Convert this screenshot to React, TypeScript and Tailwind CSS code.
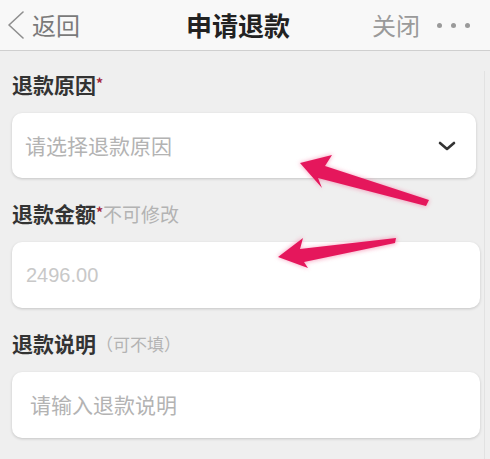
import React from 'react';

const cjk = { fontFamily: '"Noto Sans CJK SC", "Noto Sans", sans-serif' };

function ChevronLeft() {
  return (
    <svg width="20" height="28" viewBox="0 0 20 28" fill="none" stroke="#8f8f8f" strokeWidth="1.6" strokeLinecap="round" strokeLinejoin="round">
      <polyline points="17 1 3 14 17 27" />
    </svg>
  );
}

function ChevronDown() {
  return (
    <svg width="18" height="10" viewBox="0 0 18 10" fill="none" stroke="#333" strokeWidth="2.6" strokeLinecap="round" strokeLinejoin="round">
      <polyline points="2 2 9 8 16 2" />
    </svg>
  );
}

function Arrows() {
  return (
    <svg className="pointer-events-none absolute left-0 top-0" width="490" height="459" viewBox="0 0 490 459">
      <defs>
        <filter id="glow" x="-20%" y="-40%" width="140%" height="180%">
          <feGaussianBlur stdDeviation="2" />
        </filter>
      </defs>
      <g fill="#f47aa3" opacity="0.6" filter="url(#glow)">
        <polygon points="299,163 333,154 326,166 430,200 426,207 318,179 322,189" />
        <polygon points="277,257 303,237 300,249 397,237 396,244 304,263 309,269" />
      </g>
      <g fill="#e5175c">
        <polygon points="300,163 332,155 325,166 429,200 426,206 318,178 322,188" />
        <polygon points="278,257 303,238 300,249 396,238 395,243 304,262 308,268" />
      </g>
    </svg>
  );
}

function Field({ narrow, children }: { narrow?: boolean; children: React.ReactNode }) {
  return (
    <div
      className={
        narrow
          ? 'ml-3 mr-[8px] flex h-[65px] items-center rounded-[10px] bg-white pl-[13px] pr-5 shadow-[0_1px_3px_rgba(0,0,0,0.18)]'
          : 'ml-3 mr-[4px] flex h-[66px] items-center rounded-[10px] bg-white pl-[14px] pr-5 shadow-[0_1px_3px_rgba(0,0,0,0.18)]'
      }
    >
      {children}
    </div>
  );
}

export default function App() {
  return (
    <div className="relative h-[459px] w-[490px] overflow-hidden bg-[#efefef]" style={cjk}>
      <header className="flex h-[51px] items-center border-b border-[#cfcfcf] bg-[#f8f8f8] pl-[6px] pr-5">
        <div className="flex w-[150px] items-center gap-[6px] text-[24px] text-[#7a7a7a]">
          <ChevronLeft />
          <span className="leading-none">返回</span>
        </div>
        <div className="flex-1 text-center text-[26px] font-bold leading-none text-[#222]">申请退款</div>
        <div className="flex w-[150px] items-center justify-end gap-[17px]">
          <span className="text-[24px] leading-none text-[#9a9a9a]">关闭</span>
          <span className="flex gap-[9px]">
            <span className="h-[5px] w-[5px] rounded-full bg-[#9a9a9a]" />
            <span className="h-[5px] w-[5px] rounded-full bg-[#9a9a9a]" />
            <span className="h-[5px] w-[5px] rounded-full bg-[#9a9a9a]" />
          </span>
        </div>
      </header>

      <div className="mr-[5px] border-r border-[#e2e2e2] pb-6">
        <div className="mt-5 flex h-[28px] items-center px-3">
          <span className="text-[21px] font-bold text-[#333]">退款原因</span>
          <span className="self-start pt-[2px] text-[14px] font-bold text-[#a3263a]">*</span>
        </div>
        <div className="mt-[14px]">
          <Field narrow>
            <span className="flex-1 text-[21px] text-[#b3b3b3]">请选择退款原因</span>
            <ChevronDown />
          </Field>
        </div>

        <div className="mt-[22px] flex h-[28px] items-center px-3">
          <span className="text-[21px] font-bold text-[#333]">退款金额</span>
          <span className="self-start pt-[2px] text-[14px] font-bold text-[#a3263a]">*</span>
          <span className="text-[19px] text-[#b3b3b3]">不可修改</span>
        </div>
        <div className="mt-[14px]">
          <Field>
            <span className="text-[20px] text-[#c8c8c8]" style={{ fontFamily: '"Liberation Sans", Arial, sans-serif' }}>2496.00</span>
          </Field>
        </div>

        <div className="mt-[22px] flex h-[28px] items-center px-3">
          <span className="text-[21px] font-bold text-[#333]">退款说明</span>
          <span className="text-[17px] text-[#b3b3b3]">（可不填）</span>
        </div>
        <div className="mt-[14px]">
          <Field>
            <span className="pl-[4px] text-[21px] text-[#b3b3b3]">请输入退款说明</span>
          </Field>
        </div>
      </div>

      <Arrows />
    </div>
  );
}
